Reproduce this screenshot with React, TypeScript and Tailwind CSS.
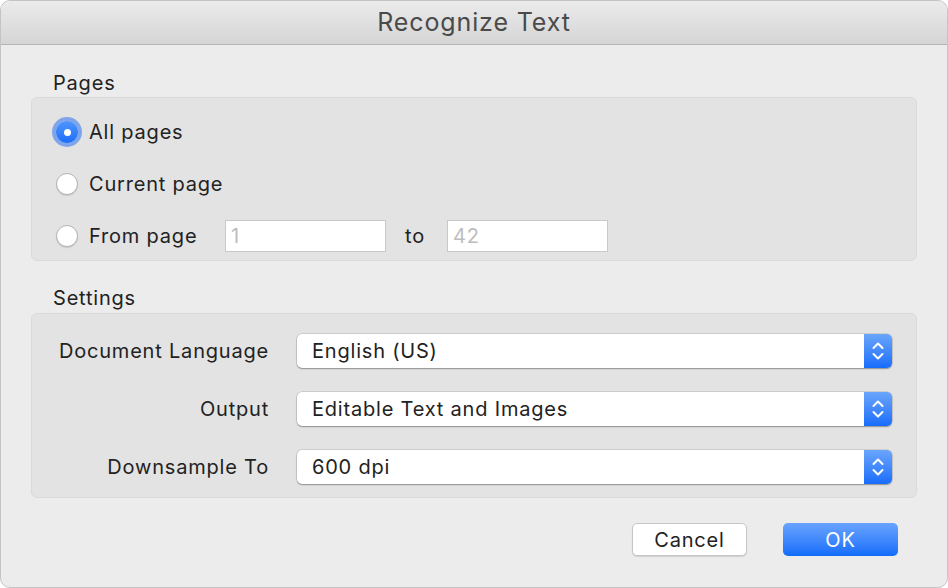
import React from "react";

const font = { fontFamily: "Inter, 'Noto Sans', sans-serif" };

function Radio({ checked }: { checked?: boolean }) {
  if (checked) {
    return (
      <span className="relative flex h-[22px] w-[22px] shrink-0 items-center justify-center rounded-full bg-gradient-to-b from-[#4e95fc] to-[#1c6ef9] shadow-[0_0_0_4px_rgba(92,143,235,0.75)]">
        <span className="h-[7px] w-[7px] rounded-full bg-white" />
      </span>
    );
  }
  return (
    <span className="h-[22px] w-[22px] shrink-0 rounded-full border border-[#b4b4b4] bg-white shadow-[0_1px_1px_rgba(0,0,0,0.12)]" />
  );
}

function Stepper() {
  return (
    <div className="flex h-full w-[28px] shrink-0 items-center justify-center rounded-r-[5px] bg-gradient-to-b from-[#6aa5fc] to-[#166cfb]">
      <svg width="14" height="22" viewBox="0 0 14 22" fill="none">
        <path d="M2.5 8 L7 3.5 L11.5 8" stroke="white" strokeWidth="2" strokeLinecap="round" strokeLinejoin="round" />
        <path d="M2.5 14 L7 18.5 L11.5 14" stroke="white" strokeWidth="2" strokeLinecap="round" strokeLinejoin="round" />
      </svg>
    </div>
  );
}

function Select({ value }: { value: string }) {
  return (
    <div className="flex h-[34px] flex-1 items-stretch rounded-[5px] bg-white shadow-[0_0_0_0.5px_rgba(0,0,0,0.18),0_1px_1.5px_rgba(0,0,0,0.3)]">
      <div className="flex flex-1 items-center pl-[15px] text-[20px] text-[#222]">{value}</div>
      <Stepper />
    </div>
  );
}

function TextInput({ placeholder }: { placeholder: string }) {
  return (
    <div className="flex h-[32px] w-[161px] items-center border border-[#c9c9c9] bg-white pl-[5px] text-[20px] text-[#bdbdbd]">
      {placeholder}
    </div>
  );
}

export default function App() {
  const settings = [
    { label: "Document Language", value: "English (US)" },
    { label: "Output", value: "Editable Text and Images" },
    { label: "Downsample To", value: "600 dpi" },
  ];

  return (
    <div
      style={font}
      className="h-[588px] w-[948px] overflow-hidden rounded-[10px] border border-[#c4c4c4] bg-[#ececec] tracking-[0.05em] text-[#222]"
    >
      <div className="flex h-[44px] items-center justify-center border-b border-[#b6b6b6] bg-gradient-to-b from-[#ebebeb] to-[#d5d5d5] text-[25px] tracking-[0.035em] text-[#4a4a4a]">
        Recognize Text
      </div>

      <div className="px-[30px]">
        <div className="h-[52px] pl-[22px] pt-[26px] text-[20px] leading-[24px]">Pages</div>

        <div className="h-[164px] rounded-[6px] border border-[#dadada] bg-[#e3e3e3] pl-[24px] pt-[8px]">
          <div className="flex h-[52px] items-center gap-[11px] text-[20px]">
            <Radio checked />
            <span>All pages</span>
          </div>
          <div className="flex h-[52px] items-center gap-[11px] text-[20px]">
            <Radio />
            <span>Current page</span>
          </div>
          <div className="flex h-[52px] items-center text-[20px]">
            <Radio />
            <span className="ml-[11px] w-[136px]">From page</span>
            <TextInput placeholder="1" />
            <span className="w-[61px] pl-[19px]">to</span>
            <TextInput placeholder="42" />
          </div>
        </div>

        <div className="h-[52px] pl-[22px] pt-[25px] text-[20px] leading-[24px]">Settings</div>

        <div className="h-[185px] rounded-[6px] border border-[#dadada] bg-[#e3e3e3] pr-[24px] pt-[8px]">
          {settings.map((s) => (
            <div key={s.label} className="flex h-[58px] items-center gap-[28px]">
              <div className="w-[237px] text-right text-[20px]">{s.label}</div>
              <Select value={s.value} />
            </div>
          ))}
        </div>

        <div className="mt-[25px] flex justify-end gap-[36px] pr-[19px]">
          <button className="h-[33px] w-[115px] rounded-[5px] border border-[#c6c6c6] bg-white text-[20px] text-[#222] shadow-[0_1px_1px_rgba(0,0,0,0.12)]">
            Cancel
          </button>
          <button className="h-[33px] w-[115px] rounded-[5px] bg-gradient-to-b from-[#69a3fd] to-[#0f6cfb] text-[20px] text-white">
            OK
          </button>
        </div>
      </div>
    </div>
  );
}
